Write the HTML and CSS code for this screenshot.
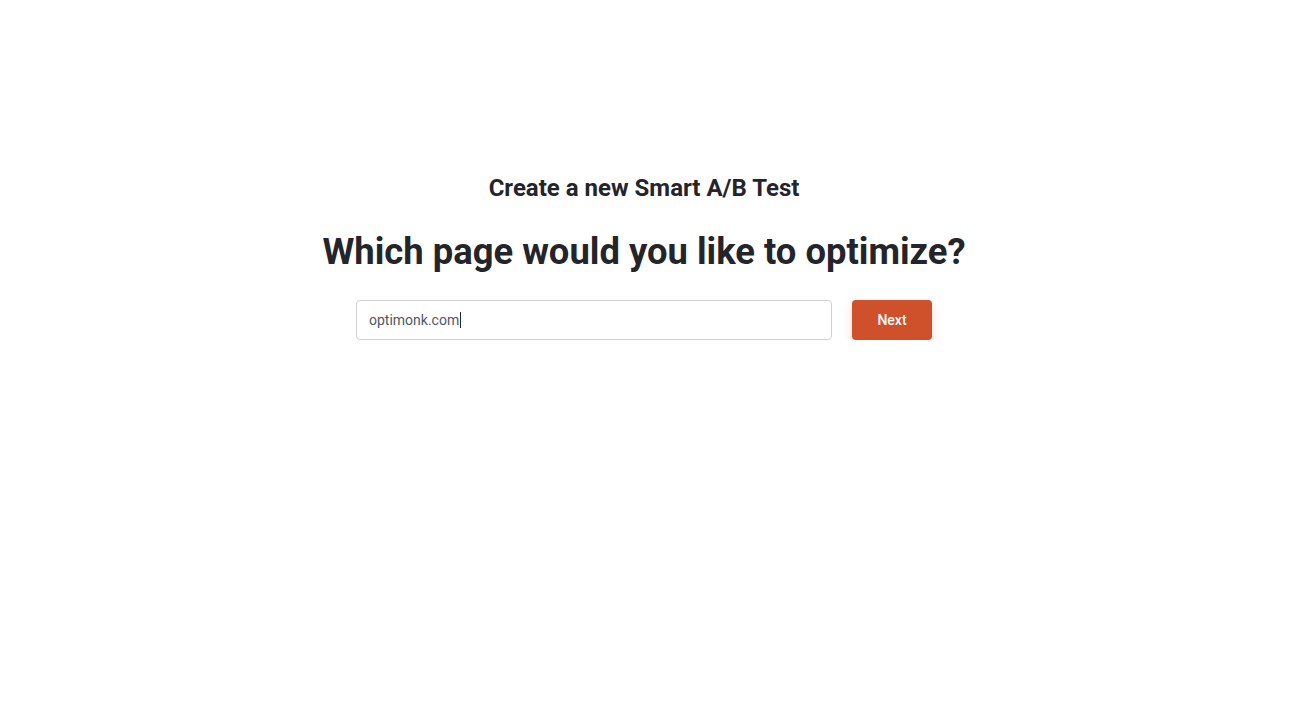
FILE: index.html
```html
<!DOCTYPE html>
<html lang="en">
<head>
<meta charset="utf-8">
<title>Create a new Smart A/B Test</title>
<link rel="stylesheet" href="styles.css">
</head>
<body>
<main class="page">
  <section class="wizard">
    <h2 class="wizard-title">Create a new Smart A/B Test</h2>
    <h1 class="wizard-question">Which page would you like to optimize?</h1>
    <form class="url-form">
      <div class="url-input"><span class="url-value">optimonk.com</span><span class="caret"></span></div>
      <button type="button" class="btn-next">Next</button>
    </form>
  </section>
</main>
</body>
</html>
```

FILE: styles.css
```css
html, body {
  margin: 0;
  padding: 0;
  background: #ffffff;
}

body {
  font-family: Roboto, "Liberation Sans", Arial, sans-serif;
  color: #23252a;
}

.page {
  padding: 174px 21px 0 0;
  display: flex;
  justify-content: center;
}

.wizard {
  display: flex;
  flex-direction: column;
  align-items: center;
}

.wizard-title {
  margin: 0;
  font-size: 24px;
  font-weight: 700;
  line-height: 28px;
  color: #23252a;
}

.wizard-question {
  margin: 29px 0 0;
  font-size: 36.4px;
  font-weight: 700;
  line-height: 42px;
  color: #23252a;
}

.url-form {
  margin-top: 27px;
  display: flex;
  gap: 20px;
}

.url-input {
  box-sizing: border-box;
  width: 476px;
  height: 40px;
  border: 1px solid #cfd1d4;
  border-radius: 4px;
  padding: 0 12px;
  display: flex;
  align-items: center;
  font-size: 14px;
  color: #505763;
}

.caret {
  display: inline-block;
  width: 1px;
  height: 16px;
  background: #23252a;
  margin-left: 1px;
}

.btn-next {
  box-sizing: border-box;
  width: 80px;
  height: 40px;
  border: none;
  border-radius: 4px;
  background: #cf512c;
  color: #ffffff;
  font-family: Roboto, "Liberation Sans", Arial, sans-serif;
  font-size: 14px;
  font-weight: 500;
  box-shadow: 0 4px 10px rgba(207, 81, 44, 0.22);
  cursor: pointer;
}
```
